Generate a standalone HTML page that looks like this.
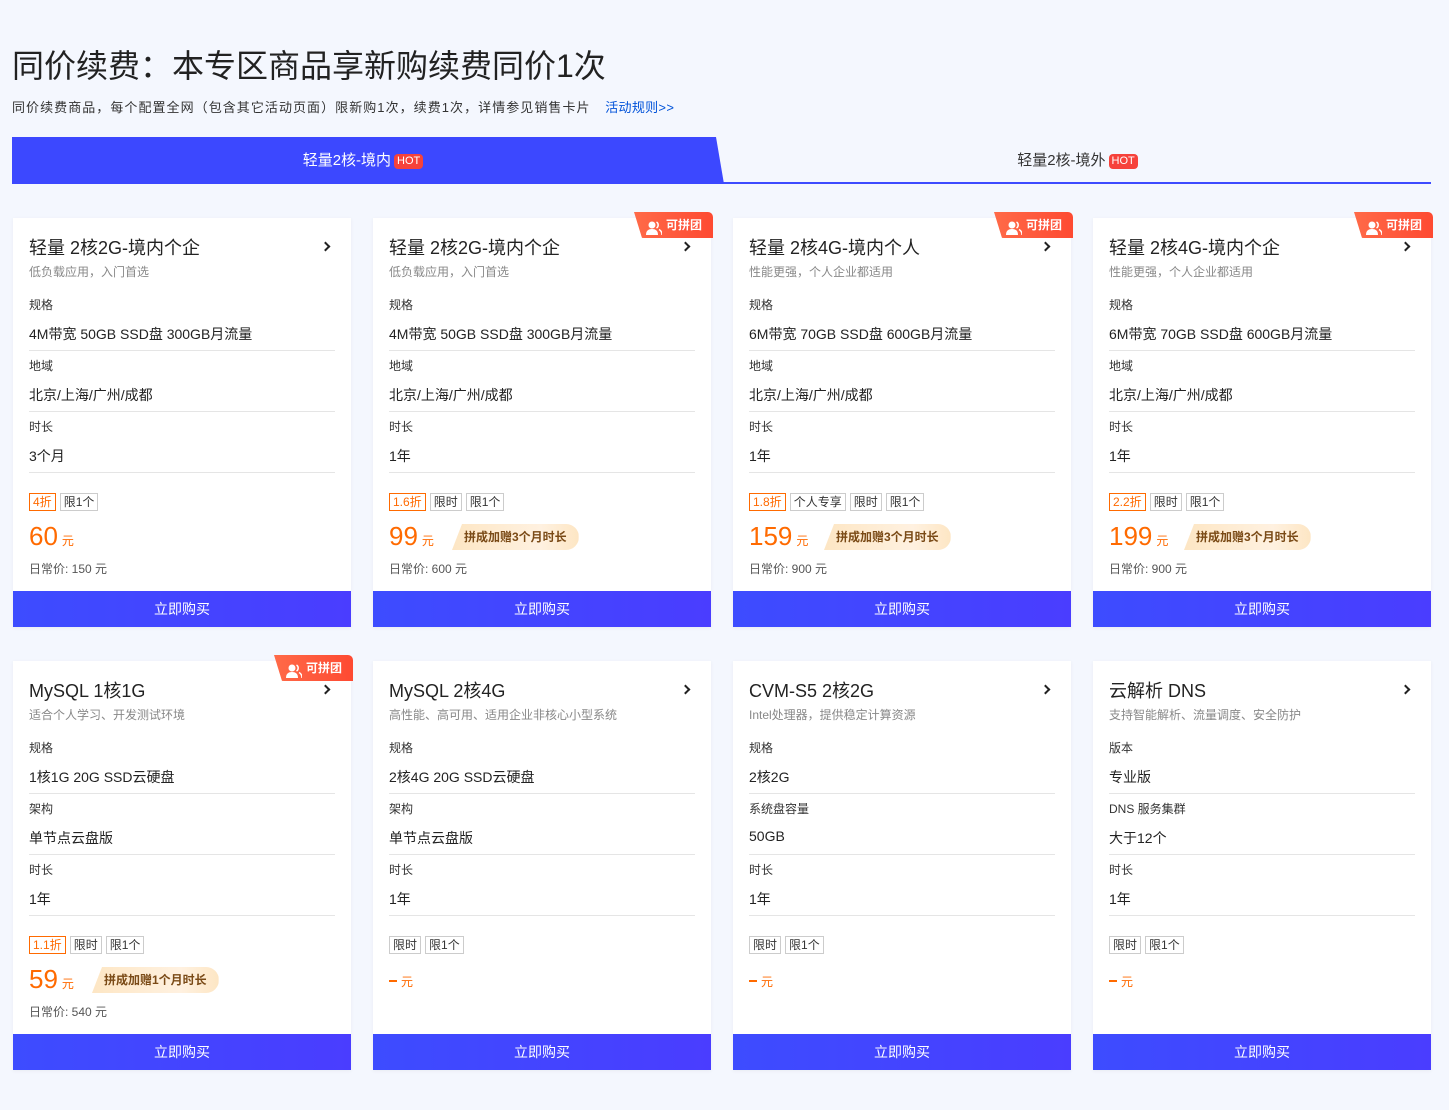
<!DOCTYPE html>
<html><head><meta charset="utf-8"><style>
*{margin:0;padding:0;box-sizing:border-box}
body{width:1449px;height:1110px;background:#f4f7fe;font-family:"Liberation Sans","Noto Sans CJK SC",sans-serif;position:relative;overflow:hidden;color:#222}
.h1{position:absolute;left:12px;top:41px;font-size:32px;color:#222;letter-spacing:0}
.sub{position:absolute;left:12px;top:97px;font-size:13px;color:#333;letter-spacing:1.05px}
.sub a{color:#0052d9;margin-left:10px;text-decoration:none;letter-spacing:0.3px}
.tabline{position:absolute;left:12px;top:182px;width:1419px;height:2px;background:#3d4bff}
.tab1{position:absolute;left:12px;top:137px;width:712px;height:47px;background:#3c48ff;clip-path:polygon(0 0,704px 0,712px 100%,0 100%);color:#fff;font-size:15px;text-align:center;line-height:47px;padding-right:10px}
.tab2{position:absolute;left:724px;top:137px;width:707px;height:47px;color:#333;font-size:15px;text-align:center;line-height:47px}
.hot{display:inline-block;background:#f6423b;color:#fff;font-size:11px;line-height:15px;padding:0 3px;border-radius:4px;vertical-align:1px;margin-left:3px}
.card{position:absolute;width:338px;height:409px;background:#fff;box-shadow:0 1px 4px rgba(0,0,0,.05)}
.card>*{position:absolute}
.t{left:16px;top:16px;font-size:18px;color:#222}
.arr{border-right:2px solid #222;border-top:2px solid #222;transform:rotate(45deg);width:7px;height:7px;top:25px;right:22px}
.d{left:16px;top:45px;font-size:12px;color:#888}
.l{left:16px;font-size:12px;color:#333}
.v{left:16px;font-size:14px;color:#222}
.hr{left:16px;width:306px;height:1px;background:#e5e5e5}
.tags{left:16px;font-size:12px;line-height:16px}
.tags span{display:inline-block;border:1px solid #ccc;color:#333;padding:0 3px;margin-right:4px}
.tags span.o{border-color:#ff6a00;color:#ff6a00}
.price{left:16px;font-size:26px;color:#ff6a00;line-height:30px}
.price small{font-size:12px;margin-left:4px}
.dash{left:16px;top:312px;font-size:12px;color:#ff6a00}
.dash b{display:inline-block;width:8px;height:2px;background:#ff6a00;vertical-align:4px;margin-right:4px}
.gift{left:79px;height:26px;line-height:26px;font-size:12px;font-weight:bold;color:#7a4a16;background:linear-gradient(90deg,#fde6c4,#fff1e0 70%,#fde6c4);padding:0 12px 0 12px;border-radius:0 13px 13px 0;clip-path:polygon(10px 0,100% 0,100% 100%,0 100%)}
.orig{left:16px;font-size:12px;color:#555}
.btn{left:0;bottom:0;width:338px;height:36px;background:linear-gradient(90deg,#3d4cff,#4a3dff);color:#fff;text-align:center;line-height:36px;font-size:14px}
.pt{right:-2px;top:-6px;height:26px;width:79px;background:linear-gradient(90deg,#ff6a48,#fe4a32);color:#fff;font-size:12px;font-weight:bold;line-height:26px;padding-left:32px;border-radius:0 5px 0 10px;clip-path:polygon(0 0,100% 0,100% 100%,8px 100%)}
.pt i{position:absolute;left:12px;top:6px;width:16px;height:14px}
</style></head><body>
<div class="h1">同价续费：本专区商品享新购续费同价1次</div>
<div class="sub">同价续费商品，每个配置全网（包含其它活动页面）限新购1次，续费1次，详情参见销售卡片 <a>活动规则&gt;&gt;</a></div>
<div class="tabline"></div>
<div class="tab1">轻量2核-境内<span class="hot">HOT</span></div>
<div class="tab2">轻量2核-境外<span class="hot">HOT</span></div>

<div class="card" style="left:13px;top:218px">
<div class="t">轻量 2核2G-境内个企</div><div class="arr"></div><div class="d">低负载应用，入门首选</div>
<div class="l" style="top:78px">规格</div><div class="v" style="top:106px">4M带宽 50GB SSD盘 300GB月流量</div><div class="hr" style="top:132px"></div>
<div class="l" style="top:139px">地域</div><div class="v" style="top:167px">北京/上海/广州/成都</div><div class="hr" style="top:193px"></div>
<div class="l" style="top:200px">时长</div><div class="v" style="top:228px">3个月</div><div class="hr" style="top:254px"></div>
<div class="tags" style="top:275px"><span class="o">4折</span><span>限1个</span></div>
<div class="price" style="top:303px">60<small>元</small></div>
<div class="orig" style="top:342px">日常价: 150 元</div><div class="btn">立即购买</div></div>

<div class="card" style="left:373px;top:218px">
<div class="pt"><i><svg width="16" height="14" viewBox="0 0 16 14"><circle cx="6" cy="4" r="3.5" fill="#fff"/><path d="M0 14c0-4.5 2.5-6 6-6s6 1.5 6 6z" fill="#fff"/><path d="M10.5 1a3.5 3.5 0 010 6M13 8.5c2 1 3 2.5 3 5.5" stroke="#fff" stroke-width="1.5" fill="none"/></svg></i>可拼团</div>
<div class="t">轻量 2核2G-境内个企</div><div class="arr"></div><div class="d">低负载应用，入门首选</div>
<div class="l" style="top:78px">规格</div><div class="v" style="top:106px">4M带宽 50GB SSD盘 300GB月流量</div><div class="hr" style="top:132px"></div>
<div class="l" style="top:139px">地域</div><div class="v" style="top:167px">北京/上海/广州/成都</div><div class="hr" style="top:193px"></div>
<div class="l" style="top:200px">时长</div><div class="v" style="top:228px">1年</div><div class="hr" style="top:254px"></div>
<div class="tags" style="top:275px"><span class="o">1.6折</span><span>限时</span><span>限1个</span></div>
<div class="price" style="top:303px">99<small>元</small></div><div class="gift" style="top:306px">拼成加赠3个月时长</div>
<div class="orig" style="top:342px">日常价: 600 元</div><div class="btn">立即购买</div></div>

<div class="card" style="left:733px;top:218px">
<div class="pt"><i><svg width="16" height="14" viewBox="0 0 16 14"><circle cx="6" cy="4" r="3.5" fill="#fff"/><path d="M0 14c0-4.5 2.5-6 6-6s6 1.5 6 6z" fill="#fff"/><path d="M10.5 1a3.5 3.5 0 010 6M13 8.5c2 1 3 2.5 3 5.5" stroke="#fff" stroke-width="1.5" fill="none"/></svg></i>可拼团</div>
<div class="t">轻量 2核4G-境内个人</div><div class="arr"></div><div class="d">性能更强，个人企业都适用</div>
<div class="l" style="top:78px">规格</div><div class="v" style="top:106px">6M带宽 70GB SSD盘 600GB月流量</div><div class="hr" style="top:132px"></div>
<div class="l" style="top:139px">地域</div><div class="v" style="top:167px">北京/上海/广州/成都</div><div class="hr" style="top:193px"></div>
<div class="l" style="top:200px">时长</div><div class="v" style="top:228px">1年</div><div class="hr" style="top:254px"></div>
<div class="tags" style="top:275px"><span class="o">1.8折</span><span>个人专享</span><span>限时</span><span>限1个</span></div>
<div class="price" style="top:303px">159<small>元</small></div><div class="gift" style="top:306px;left:91px">拼成加赠3个月时长</div>
<div class="orig" style="top:342px">日常价: 900 元</div><div class="btn">立即购买</div></div>

<div class="card" style="left:1093px;top:218px">
<div class="pt"><i><svg width="16" height="14" viewBox="0 0 16 14"><circle cx="6" cy="4" r="3.5" fill="#fff"/><path d="M0 14c0-4.5 2.5-6 6-6s6 1.5 6 6z" fill="#fff"/><path d="M10.5 1a3.5 3.5 0 010 6M13 8.5c2 1 3 2.5 3 5.5" stroke="#fff" stroke-width="1.5" fill="none"/></svg></i>可拼团</div>
<div class="t">轻量 2核4G-境内个企</div><div class="arr"></div><div class="d">性能更强，个人企业都适用</div>
<div class="l" style="top:78px">规格</div><div class="v" style="top:106px">6M带宽 70GB SSD盘 600GB月流量</div><div class="hr" style="top:132px"></div>
<div class="l" style="top:139px">地域</div><div class="v" style="top:167px">北京/上海/广州/成都</div><div class="hr" style="top:193px"></div>
<div class="l" style="top:200px">时长</div><div class="v" style="top:228px">1年</div><div class="hr" style="top:254px"></div>
<div class="tags" style="top:275px"><span class="o">2.2折</span><span>限时</span><span>限1个</span></div>
<div class="price" style="top:303px">199<small>元</small></div><div class="gift" style="top:306px;left:91px">拼成加赠3个月时长</div>
<div class="orig" style="top:342px">日常价: 900 元</div><div class="btn">立即购买</div></div>

<div class="card" style="left:13px;top:661px">
<div class="pt"><i><svg width="16" height="14" viewBox="0 0 16 14"><circle cx="6" cy="4" r="3.5" fill="#fff"/><path d="M0 14c0-4.5 2.5-6 6-6s6 1.5 6 6z" fill="#fff"/><path d="M10.5 1a3.5 3.5 0 010 6M13 8.5c2 1 3 2.5 3 5.5" stroke="#fff" stroke-width="1.5" fill="none"/></svg></i>可拼团</div>
<div class="t">MySQL 1核1G</div><div class="arr"></div><div class="d">适合个人学习、开发测试环境</div>
<div class="l" style="top:78px">规格</div><div class="v" style="top:106px">1核1G 20G SSD云硬盘</div><div class="hr" style="top:132px"></div>
<div class="l" style="top:139px">架构</div><div class="v" style="top:167px">单节点云盘版</div><div class="hr" style="top:193px"></div>
<div class="l" style="top:200px">时长</div><div class="v" style="top:228px">1年</div><div class="hr" style="top:254px"></div>
<div class="tags" style="top:275px"><span class="o">1.1折</span><span>限时</span><span>限1个</span></div>
<div class="price" style="top:303px">59<small>元</small></div><div class="gift" style="top:306px;left:79px">拼成加赠1个月时长</div>
<div class="orig" style="top:342px">日常价: 540 元</div><div class="btn">立即购买</div></div>

<div class="card" style="left:373px;top:661px">
<div class="t">MySQL 2核4G</div><div class="arr"></div><div class="d">高性能、高可用、适用企业非核心小型系统</div>
<div class="l" style="top:78px">规格</div><div class="v" style="top:106px">2核4G 20G SSD云硬盘</div><div class="hr" style="top:132px"></div>
<div class="l" style="top:139px">架构</div><div class="v" style="top:167px">单节点云盘版</div><div class="hr" style="top:193px"></div>
<div class="l" style="top:200px">时长</div><div class="v" style="top:228px">1年</div><div class="hr" style="top:254px"></div>
<div class="tags" style="top:275px"><span>限时</span><span>限1个</span></div>
<div class="dash"><b></b>元</div>
<div class="btn">立即购买</div></div>

<div class="card" style="left:733px;top:661px">
<div class="t">CVM-S5 2核2G</div><div class="arr"></div><div class="d">Intel处理器，提供稳定计算资源</div>
<div class="l" style="top:78px">规格</div><div class="v" style="top:106px">2核2G</div><div class="hr" style="top:132px"></div>
<div class="l" style="top:139px">系统盘容量</div><div class="v" style="top:167px">50GB</div><div class="hr" style="top:193px"></div>
<div class="l" style="top:200px">时长</div><div class="v" style="top:228px">1年</div><div class="hr" style="top:254px"></div>
<div class="tags" style="top:275px"><span>限时</span><span>限1个</span></div>
<div class="dash"><b></b>元</div>
<div class="btn">立即购买</div></div>

<div class="card" style="left:1093px;top:661px">
<div class="t">云解析 DNS</div><div class="arr"></div><div class="d">支持智能解析、流量调度、安全防护</div>
<div class="l" style="top:78px">版本</div><div class="v" style="top:106px">专业版</div><div class="hr" style="top:132px"></div>
<div class="l" style="top:139px">DNS 服务集群</div><div class="v" style="top:167px">大于12个</div><div class="hr" style="top:193px"></div>
<div class="l" style="top:200px">时长</div><div class="v" style="top:228px">1年</div><div class="hr" style="top:254px"></div>
<div class="tags" style="top:275px"><span>限时</span><span>限1个</span></div>
<div class="dash"><b></b>元</div>
<div class="btn">立即购买</div></div>
</body></html>
